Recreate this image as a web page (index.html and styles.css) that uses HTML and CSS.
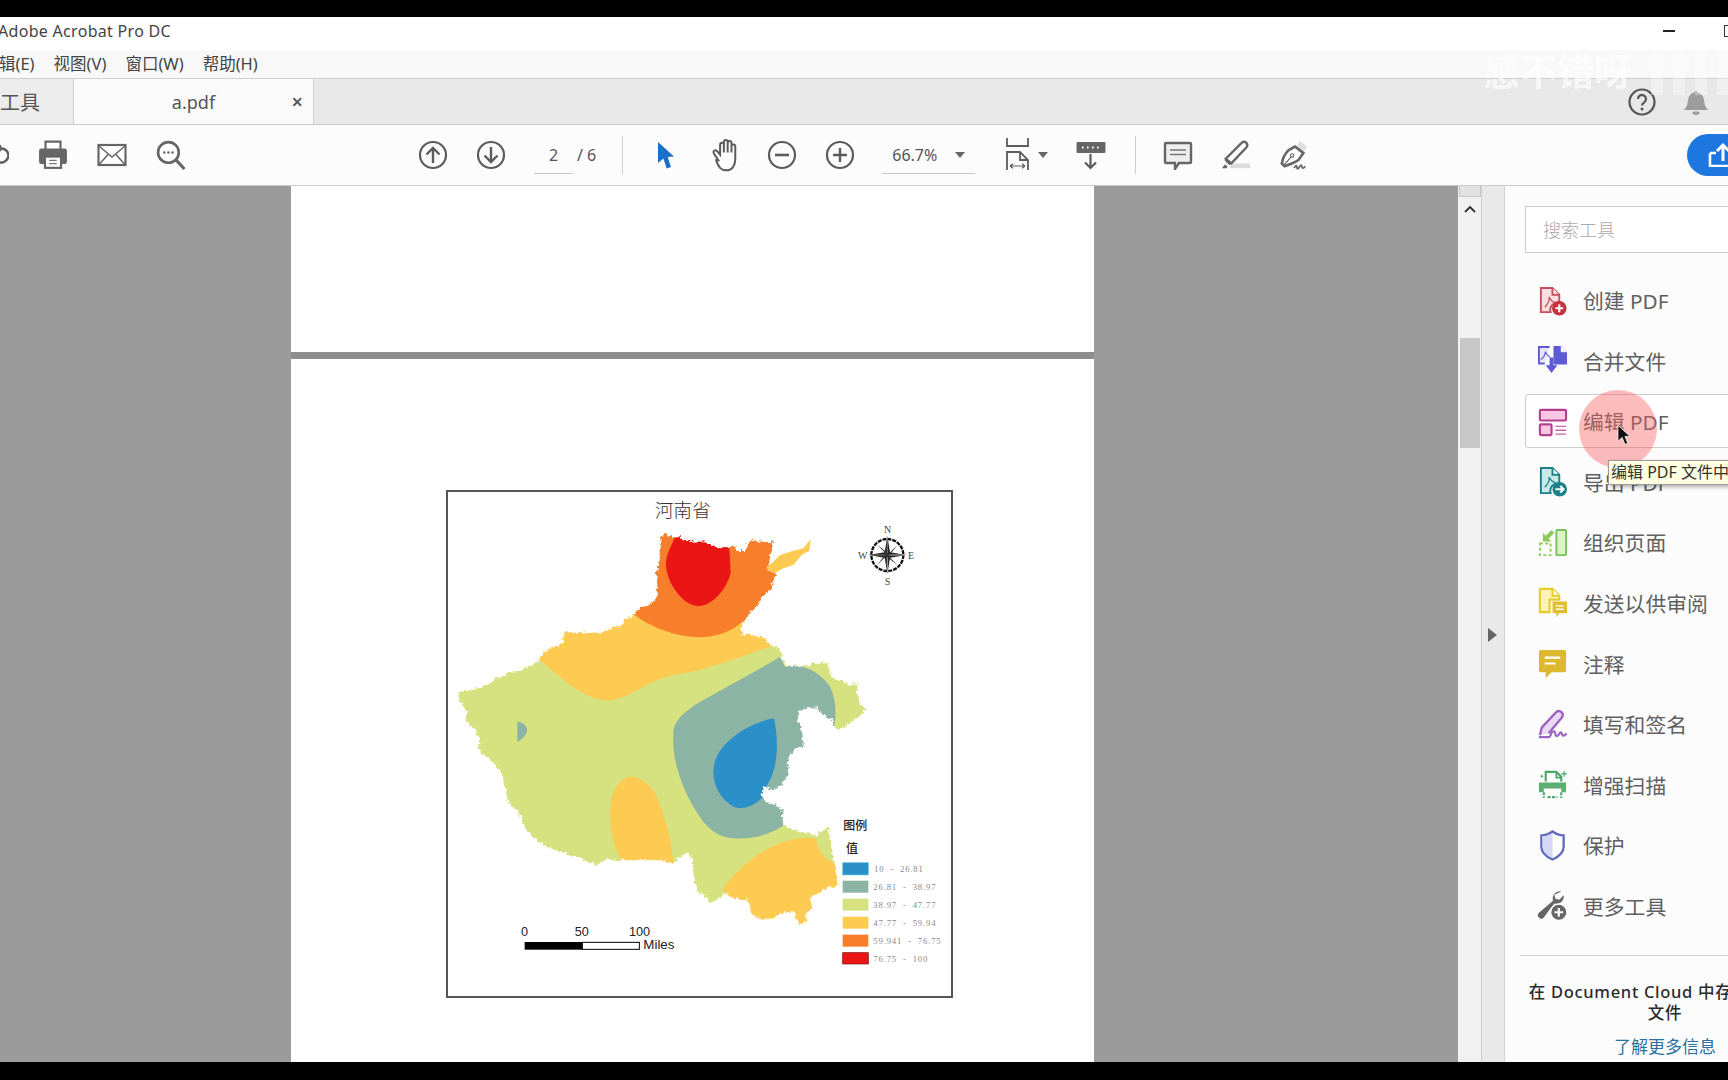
FILE: index.html
```html
<!DOCTYPE html>
<html lang="zh-CN">
<head>
<meta charset="utf-8">
<title>Adobe Acrobat Pro DC</title>
<link rel="stylesheet" href="styles.css">
</head>
<body>
<div class="app">
  <div class="letterbox-top"></div>
  <header class="titlebar">
    <span class="app-title">Adobe Acrobat Pro DC</span>
    <div class="win-controls"><span class="win-min"></span><span class="win-max"></span></div>
  </header>
  <nav class="menubar"><span>辑(E)</span><span>视图(V)</span><span>窗口(W)</span><span>帮助(H)</span></nav>
  <div class="tabbar">
    <div class="tab tab-tools">工具</div>
    <div class="tab tab-doc"><span class="tab-name">a.pdf</span><span class="tab-close">×</span></div>
    <div class="tab-actions">
      <svg class="ic-help" viewBox="0 0 30 30"><circle cx="15" cy="15" r="12.5" fill="none" stroke="#555" stroke-width="2.2"/><path d="M11 12a4 4 0 1 1 6.2 3.3c-1.5 1-2.2 1.6-2.2 3.2" fill="none" stroke="#555" stroke-width="2.2"/><circle cx="15" cy="22" r="1.5" fill="#555"/></svg>
      <svg class="ic-bell" viewBox="0 0 30 30"><path d="M3 23c3-3 3.500-6 4-10 .5-4 3-7 6.500-7.500L15 3l1.500 2.500C20 6 22.500 9 23 13c.5 4 1 7 4 10z" fill="#9c9c9c"/><ellipse cx="15" cy="26" rx="3.500" ry="1.800" fill="#9c9c9c"/></svg>
    </div>
  </div>
  <div class="toolbar">
    <div class="tool-group group-file">
      <button class="tool"><svg viewBox="0 0 30 30"><path d="M22 8.500a7 7 0 1 1-4 1.500M21 5v5h-5" fill="none" stroke="#5f5f5f" stroke-width="2.400"/></svg></button>
      <button class="tool"><svg viewBox="1 2 28 27"><path d="M8 10V3h14v7" fill="#fff" stroke="#666" stroke-width="2"/><path d="M4 9.500h22a2 2 0 0 1 2 2V22a2 2 0 0 1-2 2h-3v-6H7v6H4a2 2 0 0 1-2-2V11.500a2 2 0 0 1 2-2z" fill="#666"/><rect x="7.500" y="17" width="15" height="10.500" fill="#fff" stroke="#666" stroke-width="2"/><path d="M11.500 20.500h7M11.500 23.500h7" stroke="#777" stroke-width="1.300"/></svg></button>
      <button class="tool"><svg viewBox="0 0 30 30"><rect x="1.500" y="5" width="27" height="20" fill="#fff" stroke="#666" stroke-width="2.200"/><path d="M2 6l13 11L28 6M2 24.500l9.500-10.500M28 24.500L18.500 14" fill="none" stroke="#666" stroke-width="1.500"/></svg></button>
      <button class="tool"><svg viewBox="1 0 28 29"><circle cx="12.500" cy="12" r="10" fill="#fff" stroke="#666" stroke-width="2.600"/><path d="M20 19.500L28 28" stroke="#666" stroke-width="3"/><circle cx="8.500" cy="12" r="1.200" fill="#666"/><circle cx="12.500" cy="12" r="1.200" fill="#666"/><circle cx="16.500" cy="12" r="1.200" fill="#666"/></svg></button>
    </div>
    <div class="tool-group group-nav">
      <button class="tool"><svg viewBox="0 0 30 30"><circle cx="15" cy="15" r="13" fill="none" stroke="#5c5c5c" stroke-width="2.200"/><path d="M15 23V8M8.500 14.500L15 8l6.500 6.500" fill="none" stroke="#5c5c5c" stroke-width="2.400"/></svg></button>
      <button class="tool"><svg viewBox="0 0 30 30"><circle cx="15" cy="15" r="13" fill="none" stroke="#5c5c5c" stroke-width="2.200"/><path d="M15 7v15M8.500 15.500L15 22l6.500-6.500" fill="none" stroke="#5c5c5c" stroke-width="2.400"/></svg></button>
      <div class="page-field"><span class="page-num">2</span></div>
      <span class="page-total">/ 6</span>
    </div>
    <span class="tool-sep sep-a"></span>
    <div class="tool-group group-view">
      <button class="tool"><svg viewBox="0 0 30 30"><path d="M7 2l16 14.500-6.300.6L20 27l-4.300 1.500-3.300-10L7 23z" fill="#1c6fc4"/></svg></button>
      <button class="tool tool-hand"><svg viewBox="1 1 24 30.500"><path d="M8 21L4 15c-1.500-2.500 1.500-4 3-2l2.500 3V7a1.700 1.700 0 0 1 3.400 0v7V4.500a1.700 1.700 0 0 1 3.400 0V14V5.500a1.700 1.700 0 0 1 3.400 0V14V8.500a1.700 1.700 0 0 1 3.400 0V20c0 6-3 10-8 10s-7-3-9.100-9z" fill="#fff" stroke="#5c5c5c" stroke-width="1.800"/></svg></button>
      <button class="tool"><svg viewBox="0 0 30 30"><circle cx="15" cy="15" r="13" fill="none" stroke="#5c5c5c" stroke-width="2.200"/><path d="M8 15h14" stroke="#5c5c5c" stroke-width="2.600"/></svg></button>
      <button class="tool"><svg viewBox="0 0 30 30"><circle cx="15" cy="15" r="13" fill="none" stroke="#5c5c5c" stroke-width="2.200"/><path d="M8 15h14M15 8v14" stroke="#5c5c5c" stroke-width="2.400"/></svg></button>
      <div class="zoom-field"><span>66.7%</span><i class="caret"></i></div>
      <button class="tool tool-fit"><svg viewBox="0 0 30 36"><path d="M5 1v8h21V1" fill="none" stroke="#5c5c5c" stroke-width="1.800"/><path d="M5 33V15h13l8 8v10M18 15v8h8" fill="none" stroke="#5c5c5c" stroke-width="1.800"/><path d="M8 29h15M8 29l3-2.200M8 29l3 2.200M23 29l-3-2.200M23 29l-3 2.200" fill="none" stroke="#5c5c5c" stroke-width="1.200"/></svg><i class="caret"></i></button>
      <button class="tool tool-readout"><svg viewBox="0 0 30 30"><rect x="0.500" y="2" width="29" height="11" rx="1" fill="#666"/><path d="M6 7.500h1.600M11 7.500h1.600M16 7.500h1.600M21 7.500h1.600" stroke="#fff" stroke-width="2"/><path d="M14.500 14v14M9 22.500l5.500 5.500 5.500-5.500" fill="none" stroke="#5c5c5c" stroke-width="2.200"/></svg></button>
    </div>
    <span class="tool-sep sep-b"></span>
    <div class="tool-group group-markup">
      <button class="tool"><svg viewBox="0 0 30 30"><path d="M3 3h24a1 1 0 0 1 1 1v18a1 1 0 0 1-1 1H16l-4 6v-6H3a1 1 0 0 1-1-1V4a1 1 0 0 1 1-1z" fill="#eee" stroke="#666" stroke-width="2.400"/><path d="M7 10h16M7 14.500h16" stroke="#777" stroke-width="1.300"/></svg></button>
      <button class="tool"><svg viewBox="0 0 32 32"><rect x="10" y="25" width="21" height="5" fill="#dcdcdc"/><path d="M5 20L22 3c2-1.500 3.500-1.500 5 0s1.500 3 0 5L11 25z" fill="#fff" stroke="#666" stroke-width="2.600"/><path d="M5 20l6 5-2 2-5-5z" fill="#666"/><path d="M1 30l3-4 3 2-1 2z" fill="#666"/></svg></button>
      <button class="tool"><svg viewBox="0 0 32 32"><path d="M22 1l8 6-4 6-7-5z" fill="#ddd"/><path d="M17 7l9 7-5 7c-4 3-10 5-15 7L3 25c1-6 3-10 7-14z" fill="#fff" stroke="#666" stroke-width="2.800"/><path d="M5 27l8-9" stroke="#666" stroke-width="1.300"/><circle cx="14" cy="16.500" r="1.800" fill="none" stroke="#666" stroke-width="1.200"/><path d="M16 30c2-3 2.500-3.500 3-1s1.500 2 3-.5 2-2 2.500 0 2 2 3.500-.5" fill="none" stroke="#666" stroke-width="1.900"/></svg></button>
    </div>
    <button class="share"><svg viewBox="0 0 30 24"><path d="M2 10v13h26V10h-6M8 10H2" fill="none" stroke="#fff" stroke-width="2.600"/><path d="M15 18V2M9 8l6-6 6 6" fill="none" stroke="#fff" stroke-width="3"/></svg></button>
  </div>
  <main class="workspace">
    <section class="doc">
      <div class="pdf-page page-prev"></div>
      <div class="pdf-page page-map">
        <figure class="map-frame">
          <svg class="map" viewBox="24 36 1509 1512">
            <defs>
              <filter id="rough" x="-5%" y="-5%" width="110%" height="110%">
                <feTurbulence type="turbulence" baseFrequency="0.07" numOctaves="2" seed="4" result="noise"/>
                <feDisplacementMap in="SourceGraphic" in2="noise" scale="16" xChannelSelector="R" yChannelSelector="G"/>
              </filter>
              <mask id="henan" maskUnits="userSpaceOnUse" x="0" y="0" width="1533" height="1548">
                <path fill="#fff" filter="url(#rough)" d="M660,165 672,160 690,168 715,165 722,175 745,178 760,182 790,181 810,192 830,200 848,196 880,195 890,210 912,210 920,185 930,175 950,182 975,180 982,186 994,177 990,210 985,240 978,265 992,270 1005,280 995,305 985,330 965,345 945,375 925,395 905,425 897,445 905,462 935,462 965,470 985,490 1005,498 1018,510 1025,530 1032,552 1060,555 1105,552 1115,545 1135,548 1160,543 1165,570 1178,592 1205,600 1222,612 1250,606 1247,640 1255,665 1275,685 1260,700 1225,725 1190,750 1178,735 1175,715 1150,705 1125,680 1095,678 1075,695 1065,720 1080,735 1082,765 1090,795 1060,805 1040,830 1040,850 1040,880 1025,910 995,925 965,918 962,940 970,960 1000,970 1025,985 1022,1015 1030,1035 1060,1048 1095,1055 1125,1065 1135,1052 1165,1035 1165,1065 1175,1120 1190,1215 1160,1220 1130,1235 1105,1250 1110,1280 1092,1300 1095,1320 1075,1328 1062,1310 1060,1290 1025,1295 990,1310 960,1315 930,1300 925,1270 915,1255 880,1252 850,1235 830,1255 808,1265 790,1240 770,1235 755,1180 755,1140 745,1115 725,1120 700,1140 685,1148 660,1135 610,1135 560,1135 525,1138 500,1130 465,1152 430,1138 400,1125 350,1110 320,1095 290,1080 250,1040 240,1005 220,985 195,950 192,920 180,875 155,845 108,800 118,780 100,745 70,708 78,690 55,660 50,632 85,628 120,618 155,600 165,590 205,575 245,565 290,540 305,515 330,500 365,490 368,450 400,455 445,455 480,455 510,440 540,432 550,415 575,403 600,375 625,370 650,345 645,300 650,260 655,210Z"/>
              </mask>
            </defs>
            <g mask="url(#henan)">
              <rect class="z-green" x="0" y="100" width="1400" height="1300"/>
              <path class="z-yellow" d="M280,525C350,580 420,655 500,662C570,660 610,605 700,585C800,572 900,530 1005,495L1010,380L540,380L280,450Z"/>
              <path class="z-orange" d="M560,385C620,440 700,470 780,472C840,470 880,450 915,420L1020,300L1020,130L600,130Z"/>
              <path class="z-red" d="M715,150C690,205 678,225 678,255C680,310 730,378 775,378C820,378 860,325 872,280C872,250 868,220 865,150Z"/>
              <path class="z-teal" d="M700,760C700,730 720,700 790,660C860,620 940,580 1020,530L1035,560C1100,545 1150,590 1170,620C1190,660 1190,710 1180,748L1040,1030C1000,1060 940,1080 880,1075C820,1070 790,1030 760,980C720,910 695,830 700,760Z"/>
              <path class="z-blue" d="M1002,715C940,725 860,770 830,830C805,890 830,950 880,980C910,992 945,975 965,955L975,925C1010,880 1020,800 1002,715Z"/>
              <path class="z-teal" d="M232,725C250,725 262,740 262,750C260,765 245,780 232,785Z"/>
              <path class="z-yellow" d="M565,890C530,900 510,950 510,1000C510,1060 525,1110 545,1140L700,1150C695,1090 680,1020 650,950C630,910 600,890 565,890Z"/>
              <path class="z-yellow" d="M848,1228C890,1170 960,1100 1060,1078C1090,1072 1110,1075 1130,1075C1128,1110 1150,1135 1185,1150L1220,1150L1220,1340L900,1340Z"/>
            </g>
            <path class="z-yellow" d="M978,265 1000,245 1020,225 1050,215 1090,205 1112,178 1108,212 1085,225 1060,255 1030,265 1005,280Z"/>
            <text class="map-title" x="644" y="112">河南省</text>
            <g class="compass">
              <circle cx="1342" cy="225" r="48" fill="none" stroke="#111" stroke-width="7" stroke-dasharray="12 3"/>
              <path d="M1342,168 1350,217 1399,225 1350,233 1342,282 1334,233 1285,225 1334,217Z" fill="#222"/>
              <path d="M1342,168 1342,225 1399,225 1342,225 1342,282 1342,225 1285,225" fill="none" stroke="#ccc" stroke-width="1.500"/>
              <path d="M1311,194 1346,221 1373,194 1346,229 1373,256 1338,229 1311,256 1338,221Z" fill="#333"/>
              <text class="compass-l" x="1332" y="160">N</text>
              <text class="compass-l" x="1334" y="314">S</text>
              <text class="compass-l" x="1254" y="236">W</text>
              <text class="compass-l" x="1404" y="238">E</text>
            </g>
            <text class="sc" x="243" y="1368">0</text>
            <text class="sc" x="404" y="1368">50</text>
            <text class="sc" x="567" y="1368">100</text>
            <rect class="sc-white" x="427" y="1387" width="171" height="21"/>
            <rect x="254" y="1386" width="173" height="23" fill="#000"/>
            <text class="sc sc-unit" x="610" y="1407">Miles</text>
            <text class="lg-h" x="1210" y="1050">图例</text>
            <text class="lg-h" x="1218" y="1118">值</text>
            <rect class="z-blue sw" x="1208" y="1148" width="77" height="37"/>
            <rect class="z-teal" x="1208" y="1202" width="77" height="36"/>
            <rect class="z-green" x="1208" y="1256" width="77" height="36"/>
            <rect class="z-yellow" x="1208" y="1310" width="77" height="36"/>
            <rect class="z-orange" x="1208" y="1364" width="77" height="36"/>
            <rect class="z-red sw-red" x="1208" y="1418" width="77" height="34"/>
            <text class="lg-t" x="1302" y="1176">10  -  26.81</text>
            <text class="lg-t" x="1300" y="1229">26.81  -  38.97</text>
            <text class="lg-t" x="1300" y="1283">38.97  -  47.77</text>
            <text class="lg-t" x="1300" y="1337">47.77  -  59.94</text>
            <text class="lg-t" x="1300" y="1391">59.941  -  76.75</text>
            <text class="lg-t" x="1300" y="1445">76.75  -  100</text>
          </svg>
        </figure>
      </div>
    </section>
    <div class="scrollbar">
      <span class="scroll-head"></span>
      <svg class="scroll-up" viewBox="0 0 12 8"><path d="M1 7l5-5 5 5" fill="none" stroke="#333" stroke-width="1.800"/></svg>
      <span class="scroll-thumb"></span>
    </div>
    <div class="panel-strip"><i class="strip-arrow"></i></div>
    <aside class="tools-panel">
      <div class="tools-search">搜索工具</div>
      <ul class="tools-list">
        <li class="tool-row"><svg viewBox="0 0 32 32"><path d="M4 3h12l7 7v8a8 8 0 0 0-9 10H4z" fill="#fbdde2" stroke="#c9505f" stroke-width="2"/><path d="M16 3v7h7" fill="#fff" stroke="#c9505f" stroke-width="2"/><path d="M8 23c3-3 5-7 4.500-10.500C15 17 17 18 19 18" fill="none" stroke="#c9505f" stroke-width="1.300"/><circle cx="23" cy="24" r="7.500" fill="#c9303f"/><path d="M19 24h8M23 20v8" stroke="#fff" stroke-width="2.200"/></svg><span>创建 PDF</span></li>
        <li class="tool-row"><svg viewBox="0 0 32 32"><path d="M13 2H2v17h6" fill="#e8e6fb" stroke="#5e5bd6" stroke-width="2"/><path d="M4 15c3-2 4.500-5 4.500-8 1.500 3 3 4.500 5 5.500" fill="none" stroke="#5e5bd6" stroke-width="1.300"/><path d="M17 1h8l6 6v13H17z" fill="#5e5bd6"/><path d="M25 1v6h6" fill="#fff" stroke="#fff" stroke-width=".8"/><path d="M13 13v8h-4l6 8 6-8h-4v-8z" fill="#5e5bd6"/></svg><span>合并文件</span></li>
        <li class="tool-row tool-row-active"><svg viewBox="0 0 32 32"><rect x="3" y="4" width="27" height="11" rx="1" fill="#f9c6e4" stroke="#b3408f" stroke-width="2.200"/><rect x="3" y="19" width="12" height="11" rx="1" fill="#f9c6e4" stroke="#b3408f" stroke-width="2.200"/><path d="M19 21h11M19 25h11M19 29h11" stroke="#c465a8" stroke-width="1.400"/></svg><span>编辑 PDF</span></li>
        <li class="tool-row"><svg viewBox="0 0 32 32"><path d="M4 2h12l7 7v9a8 8 0 0 0-9 10H4z" fill="#c8e8ea" stroke="#1b8089" stroke-width="2"/><path d="M16 2v7h7" fill="#fff" stroke="#1b8089" stroke-width="2"/><path d="M8 22c3-3 5-7 4.500-10.500C15 16 17 17 19 17" fill="none" stroke="#1b8089" stroke-width="1.300"/><circle cx="23.500" cy="24" r="7.500" fill="#1b8089"/><path d="M19 24h8M24 20.500l3.500 3.500-3.500 3.500" fill="none" stroke="#fff" stroke-width="2"/></svg><span>导出 PDF</span></li>
        <li class="tool-row"><svg viewBox="0 0 32 32"><rect x="20" y="3" width="10" height="26" rx="1" fill="#dcf3c8" stroke="#77c15a" stroke-width="2"/><path d="M3 17h11v12H3z" fill="none" stroke="#8fca5a" stroke-width="2" stroke-dasharray="3 2.500"/><path d="M15 3l-6 6-3-3v9h9l-3-3 6-6z" fill="#8fca5a"/></svg><span>组织页面</span></li>
        <li class="tool-row"><svg viewBox="0 0 32 32"><path d="M3 2h13l7 7v4H13v13H3z" fill="#fdf2b8" stroke="#e6cd2d" stroke-width="2.200"/><path d="M16 2v7h7" fill="#fff" stroke="#e6cd2d" stroke-width="2"/><path d="M16 15h15v12h-8l-3 4v-4h-4z" fill="#dfbe30"/><path d="M19.500 19.500h8M19.500 23h8" stroke="#fff" stroke-width="1.500"/></svg><span>发送以供审阅</span></li>
        <li class="tool-row"><svg viewBox="0 0 32 32"><path d="M4 2h24a2 2 0 0 1 2 2v19a2 2 0 0 1-2 2H15l-6 6v-6H4a2 2 0 0 1-2-2V4a2 2 0 0 1 2-2z" fill="#dcb92f"/><path d="M8 10h16M8 16h11" stroke="#fff" stroke-width="2.200"/></svg><span>注释</span></li>
        <li class="tool-row"><svg viewBox="0 0 32 32"><path d="M3 27l2-8L20 3c2-1.500 4-1 5.500.5s1.500 3.500 0 5.500L12 25" fill="#e9d9f5" stroke="#9a63c4" stroke-width="2.400"/><path d="M2 29h10c3 0 2-6 5-6s1 5 3.500 5 2.500-4 4-4 1 4 3 3.500 2-1.500 3-2.500" fill="none" stroke="#9a63c4" stroke-width="2.200"/></svg><span>填写和签名</span></li>
        <li class="tool-row"><svg viewBox="0 0 32 32"><path d="M9 13V3h11l5 5v5" fill="#fff" stroke="#4ca76a" stroke-width="2.200"/><path d="M20 3v6h5" fill="none" stroke="#4ca76a" stroke-width="1.800"/><path d="M2 14h28v10h-5v-4H7v4H2z" fill="#5cae73"/><path d="M7 24v6M25 24v6M11 29h10" stroke="#4ca76a" stroke-width="2.200" stroke-dasharray="3 1.500"/><path d="M28 2v6M25 5h6M5 6v3M3.500 7.500h3" stroke="#4ca76a" stroke-width="1.200"/></svg><span>增强扫描</span></li>
        <li class="tool-row"><svg viewBox="0 0 32 32"><path d="M16 1.500C12 4.500 9 5.500 4.500 5.500V17c0 6 5 10.500 11.500 13.500C22.500 27.500 27.500 23 27.500 17V5.500C23 5.500 20 4.500 16 1.500z" fill="#fff" stroke="#6168bf" stroke-width="2.400"/><path d="M16 3v26C10 26 5.700 22 5.700 17V6.500C10 6.500 13 5.500 16 3z" fill="#d5d8f6"/></svg><span>保护</span></li>
        <li class="tool-row"><svg viewBox="0 0 32 32"><path d="M25 1.500a7.500 7.500 0 0 0-8.500 9.500L2 23.500a3.500 3.500 0 0 0 5 5L12.500 21 18 14a7.500 7.500 0 0 0 9.500-8.500L23 10l-4-1-1-4z" fill="#666"/><circle cx="22.500" cy="23" r="8.500" fill="#666" stroke="#fcfcfd" stroke-width="1.500"/><path d="M18 23h9M22.500 18.500v9" stroke="#fff" stroke-width="2.200"/></svg><span>更多工具</span></li>
      </ul>
      <div class="cloud-promo">
        <p class="cloud-text">在 Document Cloud 中存储和共享<br>文件</p>
        <a class="cloud-link">了解更多信息</a>
      </div>
    </aside>
    <div class="click-halo"></div>
    <svg class="pointer" viewBox="0 0 16 24"><path d="M1 1v17l4.500-4 3 7.500 3-1.200-3-7.300H14z" fill="#111" stroke="#fff" stroke-width=".8"/></svg>
    <div class="tooltip">编辑 PDF 文件中的文本和图像</div>
  </main>
  <div class="letterbox-bottom"></div>
  <div class="watermark"><span class="wm-text">感不错呀</span><span class="wm-bars"><i></i><i></i><i></i><i></i></span></div>
</div>
</body>
</html>
```
FILE: styles.css
```css
* { box-sizing: border-box; }
html, body { margin: 0; height: 100%; overflow: hidden; background: #000; }
body { font-family: "Noto Sans", "Noto Sans CJK SC", sans-serif; color: #444; }
.app { position: relative; width: 1728px; height: 1080px; display: flex; flex-direction: column; overflow: hidden; }
.letterbox-top { height: 17px; background: #000; flex: none; }
.letterbox-bottom { height: 18px; background: #000; flex: none; }

.titlebar { height: 33px; flex: none; background: #fff; display: flex; align-items: center; justify-content: space-between; padding-bottom: 5px; }
.app-title { margin-left: -2px; font-size: 16px; color: #444; letter-spacing: .3px; }
.win-controls { display: flex; align-items: center; gap: 49px; margin-right: -8px; }
.win-min { width: 12px; height: 1.5px; background: #222; margin-top: 0; }
.win-max { width: 12px; height: 12px; border: 1px solid #333; }

.menubar { height: 28px; flex: none; background: #f8f8f8; display: flex; align-items: center; gap: 19px; margin-left: -1px; padding-bottom: 2px; font-size: 16.500px; color: #444; }

.tabbar { height: 47px; flex: none; background: #e8e8e8; border-top: 1px solid #cfcfcf; border-bottom: 1px solid #c9c9c9; display: flex; position: relative; }
.tab { height: 45px; display: flex; align-items: center; }
.tab-tools { width: 74px; font-size: 20px; color: #555; background: #ececec; border-right: 1px solid #cfcfcf; }
.tab-doc { width: 240px; background: #fafafa; border-right: 1px solid #cfcfcf; position: relative; justify-content: center; font-size: 18px; color: #555; }
.tab-name { margin-left: 0; }
.tab-close { position: absolute; right: 10px; font-size: 20px; font-weight: 600; color: #555; }
.tab-actions { margin-left: auto; display: flex; align-items: center; gap: 24px; margin-right: 17px; }
.ic-help { width: 30px; height: 30px; }
.ic-bell { width: 30px; height: 30px; }

.toolbar { height: 61px; flex: none; background: #fcfcfc; border-bottom: 1px solid #cacaca; display: flex; align-items: center; position: relative; }
.tool-group { display: flex; align-items: center; flex: none; }
.tool { width: 58px; height: 40px; padding: 0; border: 0; background: none; display: flex; align-items: center; justify-content: center; position: relative; flex: none; }
.tool svg { width: 30px; height: 30px; display: block; }
.group-file { margin-left: -36px; }
.group-file .tool { width: 59px; }
.group-nav { margin-left: 204px; }
.page-field { margin-left: 14px; width: 39px; height: 37px; border-bottom: 1px solid #c9c9c9; text-align: center; font-size: 16px; line-height: 37px; color: #555; }
.page-total { margin-left: 4px; font-size: 16px; color: #555; white-space: nowrap; }
.tool-sep { width: 1px; height: 38px; background: #cfcfcf; flex: none; }
.sep-a { margin-left: 26px; }
.group-view { margin-left: 14px; }
.tool-hand svg { width: 32px; height: 34px; }
.zoom-field { margin-left: 13px; width: 93px; height: 37px; border-bottom: 1px solid #c9c9c9; display: flex; align-items: center; justify-content: space-between; padding: 0 0 0 10px; font-size: 16px; color: #555; }
.caret { width: 0; height: 0; border-left: 5px solid transparent; border-right: 5px solid transparent; border-top: 6px solid #666; display: block; }
.zoom-field .caret { margin-right: 10px; }
.tool-fit { width: 90px; justify-content: flex-start; padding-left: 27px; }
.tool-fit svg { width: 30px; height: 36px; }
.tool-fit .caret { position: absolute; left: 63px; top: 17px; }
.tool-readout { width: 52px; }
.sep-b { margin-left: 18px; }
.group-markup { margin-left: 13px; }
.share { margin-left: auto; margin-right: -40px; width: 81px; height: 42px; padding: 0 0 0 21px; border: 0; border-radius: 21px; background: #1e77e0; display: flex; align-items: center; flex: none; }
.share svg { width: 30px; height: 24px; }

.workspace { flex: 1; min-height: 0; display: flex; position: relative; background: #fcfcfd; }
.doc { width: 1458px; flex: none; background: #9b9b9b; overflow: hidden; padding-left: 291px; }
.pdf-page { width: 803px; background: #fff; }
.page-prev { height: 166px; border-bottom: 7px solid #8e8e8e; box-sizing: content-box; }
.page-map { height: 800px; padding: 131px 0 0 155px; }
.map-frame { margin: 0; width: 507px; height: 508px; border: 2px solid #555; }
.map { width: 503px; height: 504px; display: block; }
.z-green { fill: #d6e17f; }
.z-yellow { fill: #fdcb52; }
.z-orange { fill: #f77f2c; }
.z-red { fill: #ea1616; }
.z-teal { fill: #8cb4a4; }
.z-blue { fill: #2b8fc8; }
.sw { stroke: #6fc7e0; stroke-width: 2; }
.sw-red { stroke: #7a1111; stroke-width: 2; }
.map-title { font-family: "Noto Sans CJK SC", sans-serif; font-size: 56px; fill: #333; font-weight: 300; }
.compass-l { font-family: "Liberation Serif", serif; font-size: 30px; fill: #444; }
.sc { font-family: "Liberation Sans", sans-serif; font-size: 38px; fill: #222; }
.sc-unit { font-size: 40px; }
.sc-white { fill: #fff; stroke: #000; stroke-width: 3; }
.lg-h { font-family: "Noto Sans CJK SC", sans-serif; font-size: 36px; font-weight: 500; fill: #222; }
.lg-t { font-family: "Liberation Serif", serif; font-size: 26px; letter-spacing: 2.500px; fill: #888; white-space: pre; }

.scrollbar { width: 24px; flex: none; background: #f1f1f2; border-right: 1px solid #cfcfcf; position: relative; display: flex; flex-direction: column; align-items: center; }
.scroll-head { width: 22px; height: 11px; background: #e2e2e2; border: 1px solid #c6c6c6; border-top: 0; flex: none; }
.scroll-up { width: 12px; height: 8px; margin-top: 8px; flex: none; }
.scroll-thumb { width: 20px; height: 110px; margin-top: 125px; background: #c8c8c8; flex: none; }
.panel-strip { width: 23px; flex: none; background: #e9e9e9; border-right: 1px solid #d2d2d2; display: flex; padding-top: 442px; padding-left: 6px; }
.strip-arrow { width: 0; height: 0; border-top: 7px solid transparent; border-bottom: 7px solid transparent; border-left: 9px solid #666; display: block; }

.tools-panel { width: 300px; flex: none; padding: 20px 0 0 20px; background: #fcfcfd; }
.tools-search { width: 300px; height: 47px; border: 1px solid #ccc; background: #fff; padding-left: 17px; font-size: 18px; line-height: 44px; color: #aaa; font-family: "Noto Sans CJK SC", sans-serif; font-weight: 300; }
.tools-list { list-style: none; margin: 18px 0 0; padding: 2px 0 0; display: flex; flex-direction: column; gap: 6.600px; }
.tool-row { width: 300px; height: 54px; display: flex; align-items: center; padding-left: 11px; gap: 15px; font-size: 20.800px; color: #606060; border: 1px solid transparent; border-radius: 3px; }
.tool-row svg { width: 31px; height: 31px; flex: none; }
.tool-row-active { border-color: #ccc; background: #fff; }
.cloud-promo { margin: 22px 0 0 -5px; width: 290px; border-top: 1px solid #d2d2d2; padding-top: 25px; text-align: center; }
.cloud-text { margin: 0; font-size: 16.500px; line-height: 21px; color: #2a2a2a; font-weight: 500; white-space: nowrap; letter-spacing: .7px; }
.cloud-link { display: block; margin-top: 13px; font-size: 17px; line-height: 22px; color: #2b6f9f; }

.click-halo { position: absolute; left: 1579px; top: 204px; width: 78px; height: 78px; border-radius: 50%; background: rgba(248, 96, 96, .42); }
.pointer { position: absolute; left: 1617px; top: 238px; width: 15px; height: 23px; }
.tooltip { position: absolute; left: 1608px; top: 274px; height: 25px; padding: 0 2px; background: #ffffe1; border: 1px solid #999; box-shadow: 2px 2px 4px rgba(0, 0, 0, .3); font-size: 16px; line-height: 23px; color: #333; white-space: nowrap; }

.watermark { position: absolute; left: 1483px; top: 45px; display: flex; align-items: flex-end; gap: 20px; pointer-events: none; }
.wm-text { font-family: "Noto Sans CJK SC", sans-serif; font-size: 37px; line-height: 50px; font-weight: 700; color: rgba(255, 255, 255, .7); white-space: nowrap; }
.wm-bars { display: flex; align-items: flex-end; gap: 10px; height: 46px; }
.wm-bars i { width: 12px; height: 44px; background: rgba(255, 255, 255, .35); display: block; }
```
